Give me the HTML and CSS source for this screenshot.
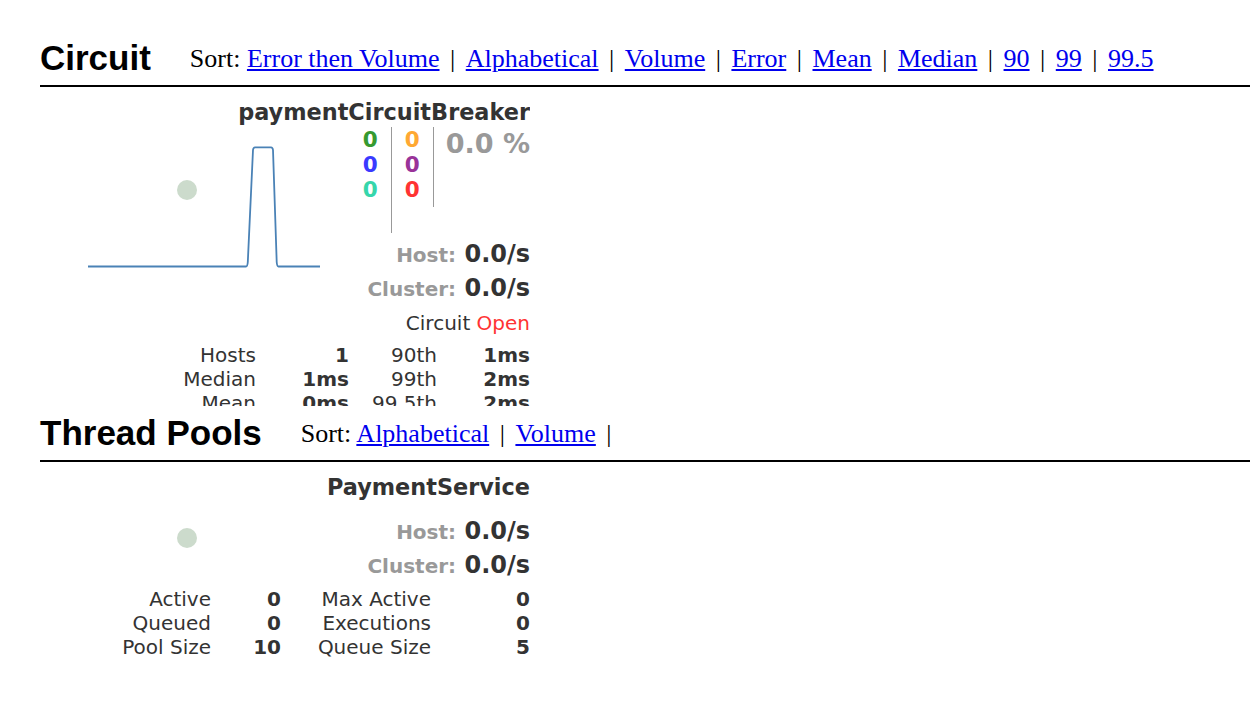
FILE: index.html
```html
<!DOCTYPE html>
<html>
<head>
<meta charset="utf-8">
<title>Hystrix Dashboard</title>
<link rel="stylesheet" href="styles.css">
</head>
<body>
<div class="page">
  <div class="section-head">
    <h2 class="section-title">Circuit</h2>
    <div class="sort">Sort: <a href="#">Error then Volume</a><span class="sep">|</span><a href="#">Alphabetical</a><span class="sep">|</span><a href="#">Volume</a><span class="sep">|</span><a href="#">Error</a><span class="sep">|</span><a href="#">Mean</a><span class="sep">|</span><a href="#">Median</a><span class="sep">|</span><a href="#">90</a><span class="sep">|</span><a href="#">99</a><span class="sep">|</span><a href="#">99.5</a></div>
  </div>

  <div class="card">
    <svg class="chart" width="490" height="319" viewBox="0 0 490 319">
      <circle cx="147" cy="103" r="10" fill="#ccdbcc"/>
      <path d="M48 179.5 H206 Q207.5 179.5 207.8 175 L213 63 Q213.3 60.3 215 60.3 H231 Q232.7 60.3 233 63 L236.7 175 Q237 179.5 238.5 179.5 H280" fill="none" stroke="#4a82b6" stroke-width="1.8"/>
    </svg>
    <div class="card-title">paymentCircuitBreaker</div>
    <div class="counters">
      <div class="count-col col-a">
        <div class="c-success">0</div>
        <div class="c-short">0</div>
        <div class="c-bad">0</div>
      </div>
      <div class="count-col col-b">
        <div class="c-timeout">0</div>
        <div class="c-rejected">0</div>
        <div class="c-failure">0</div>
      </div>
      <div class="err-rate">0.0 %</div>
    </div>
    <div class="rate rate-first"><span class="rate-lbl">Host:</span> 0.0/s</div>
    <div class="rate"><span class="rate-lbl">Cluster:</span> 0.0/s</div>
    <div class="status">Circuit <span class="open">Open</span></div>
    <div class="stats stats-circuit">
      <div>Hosts</div><div class="v">1</div><div>90th</div><div class="v">1ms</div>
      <div>Median</div><div class="v">1ms</div><div>99th</div><div class="v">2ms</div>
      <div>Mean</div><div class="v">0ms</div><div>99.5th</div><div class="v">2ms</div>
    </div>
  </div>

  <div class="section-head">
    <h2 class="section-title">Thread Pools</h2>
    <div class="sort">Sort: <a href="#">Alphabetical</a><span class="sep">|</span><a href="#">Volume</a><span class="sep">|</span></div>
  </div>

  <div class="card card-pool">
    <svg class="chart" width="490" height="240" viewBox="0 0 490 240">
      <circle cx="147" cy="76" r="10" fill="#ccdbcc"/>
    </svg>
    <div class="card-title">PaymentService</div>
    <div class="rate rate-pool"><span class="rate-lbl">Host:</span> 0.0/s</div>
    <div class="rate"><span class="rate-lbl">Cluster:</span> 0.0/s</div>
    <div class="stats stats-pool">
      <div>Active</div><div class="v">0</div><div>Max Active</div><div class="v">0</div>
      <div>Queued</div><div class="v">0</div><div>Executions</div><div class="v">0</div>
      <div>Pool Size</div><div class="v">10</div><div>Queue Size</div><div class="v">5</div>
    </div>
  </div>
</div>
</body>
</html>
```
FILE: styles.css
```css
html, body {
  margin: 0;
  padding: 0;
  background: #fff;
}

.page {
  padding: 35px 0 0 40px;
}

.section-head {
  display: flex;
  align-items: flex-start;
  padding: 3px 0 7px;
  border-bottom: 2px solid #000;
}

.section-title {
  margin: 0;
  font-family: "Liberation Sans", Arial, sans-serif;
  font-weight: bold;
  font-size: 35px;
  line-height: 40px;
  color: #000;
}

.sort {
  margin: 6px 0 0 39px;
  font-family: "Liberation Serif", "Times New Roman", serif;
  font-size: 26px;
  line-height: 30px;
  color: #000;
  white-space: nowrap;
}

.sort a {
  color: #0000ee;
  text-decoration: underline;
}

.sep {
  margin: 0 10.5px;
  color: #000;
}

.card {
  position: relative;
  width: 490px;
  height: 319px;
  margin-bottom: 4px;
  overflow: hidden;
  text-align: right;
  font-family: "DejaVu Sans", "Liberation Sans", sans-serif;
  color: #333;
}

.card-pool {
  height: 240px;
}

.chart {
  position: absolute;
  left: 0;
  top: 0;
}

.card-title {
  position: relative;
  padding-top: 11px;
  font-size: 22.4px;
  line-height: 29px;
  font-weight: bold;
  color: #333;
}

.counters {
  position: relative;
  display: flex;
  justify-content: flex-end;
  align-items: flex-start;
}

.count-col {
  font-size: 21.5px;
  line-height: 25px;
  font-weight: bold;
  border-right: 1px solid #999;
}

.col-a {
  height: 106px;
  padding-right: 13px;
}

.col-b {
  height: 80px;
  padding: 0 13px;
}

.c-success { color: #369a30; }
.c-short { color: #3a3aff; }
.c-bad { color: #36d6ab; }
.c-timeout { color: #ffa833; }
.c-rejected { color: #993399; }
.c-failure { color: #ff3333; }

.err-rate {
  padding: 2px 0 0 12px;
  font-size: 27px;
  line-height: 30px;
  font-weight: bold;
  color: #999;
  white-space: nowrap;
}

.rate {
  position: relative;
  font-size: 24px;
  line-height: 34px;
  font-weight: bold;
  color: #333;
}

.rate-first {
  margin-top: 4px;
}

.rate-pool {
  margin-top: 12px;
}

.rate-lbl {
  font-size: 20px;
  line-height: 1;
  color: #999;
}

.status {
  position: relative;
  font-size: 20px;
  line-height: 36px;
  color: #333;
}

.open {
  color: #ff3333;
}

.stats {
  position: relative;
  display: grid;
  justify-content: end;
  font-size: 20px;
  line-height: 24px;
  color: #333;
  white-space: nowrap;
}

.stats .v {
  font-weight: bold;
}

.stats-circuit {
  margin-top: 2px;
  grid-template-columns: 85px 93px 88px 93px;
}

.stats-pool {
  margin-top: 5px;
  grid-template-columns: 131px 70px 150px 99px;
}
```
